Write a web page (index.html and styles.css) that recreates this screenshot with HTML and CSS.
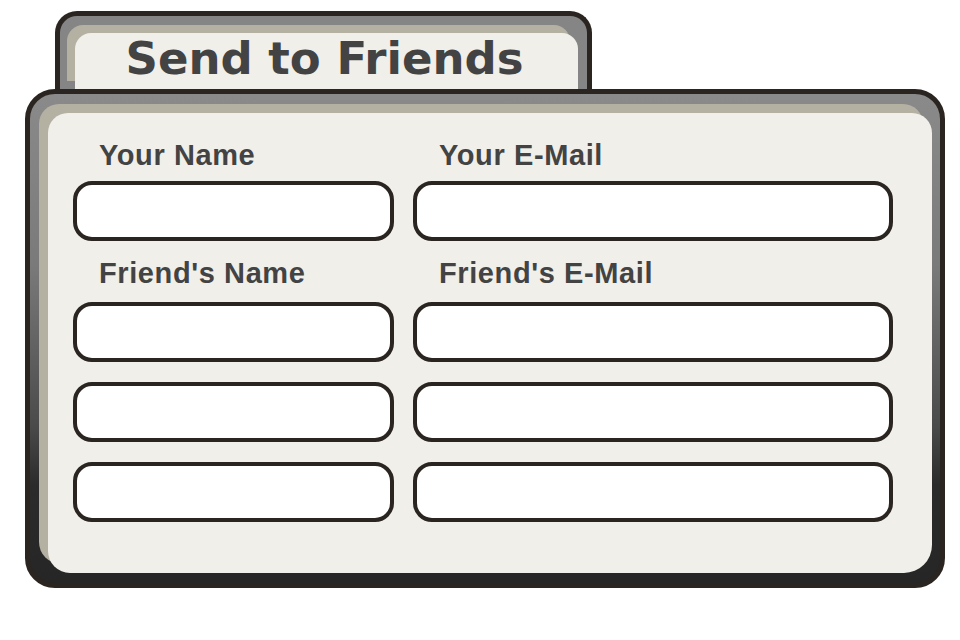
FILE: index.html
```html
<!DOCTYPE html>
<html lang="en">
<head>
<meta charset="utf-8">
<title>Send to Friends</title>
<link rel="stylesheet" href="styles.css">
</head>
<body>
<div class="page">
  <div class="tab">
    <div class="tab-inner">
      <h1 class="title">Send to Friends</h1>
    </div>
  </div>
  <div class="panel">
    <div class="panel-inner">
      <form class="form">
        <label class="label row-a" for="yn">Your Name</label>
        <label class="label row-a" for="ye">Your E-Mail</label>
        <input class="field" id="yn" type="text">
        <input class="field" id="ye" type="text">
        <label class="label row-b" for="fn1">Friend's Name</label>
        <label class="label row-b" for="fe1">Friend's E-Mail</label>
        <input class="field" id="fn1" type="text">
        <input class="field" id="fe1" type="text">
        <input class="field spaced" type="text">
        <input class="field spaced" type="text">
        <input class="field spaced" type="text">
        <input class="field spaced" type="text">
      </form>
    </div>
  </div>
</div>
</body>
</html>
```

FILE: styles.css
```css
html, body {
  margin: 0;
  padding: 0;
  background: #ffffff;
}

.page {
  padding: 11px 0 0 25px;
  width: 920px;
}

.tab {
  margin-left: 30px;
  width: 537px;
  box-sizing: border-box;
  height: 78px;
  border: 5px solid #2a2520;
  border-bottom: none;
  border-radius: 22px 22px 0 0;
  background: #858585;
  padding: 17px 9px 0 15px;
}

.tab-inner {
  height: 56px;
  box-sizing: border-box;
  padding-top: 3px;
  background: #f0efea;
  border-radius: 16px 16px 0 0;
  box-shadow: -8px -8px 0 0 #b4b1a3;
  text-align: center;
}

.title {
  margin: 0;
  padding-right: 4px;
  font-family: "DejaVu Sans", "Liberation Sans", sans-serif;
  font-weight: bold;
  font-size: 45px;
  line-height: 46px;
  color: #434343;
}

.panel {
  width: 920px;
  box-sizing: border-box;
  border: 5px solid #2a2520;
  border-radius: 30px;
  background: linear-gradient(to bottom, #8a8a8a 0%, #7a7a7a 35%, #4a4a4a 68%, #2b2b2b 80%, #262626 100%);
  padding: 19px 8px 10px 18px;
}

.panel-inner {
  background: #f0efea;
  border-radius: 20px 20px 28px 22px;
  box-shadow: -9px -9px 0 0 #b4b1a3;
  padding: 23px 0 51px 25px;
}

.form {
  display: grid;
  grid-template-columns: 321px 480px;
  column-gap: 19px;
  margin: 0;
}

.label {
  display: block;
  height: 34px;
  line-height: 38px;
  padding-left: 26px;
  font-family: "Liberation Sans", Arial, sans-serif;
  font-weight: bold;
  font-size: 29px;
  letter-spacing: 0.6px;
  color: #434343;
}

.row-a {
  margin-bottom: 11px;
}

.row-b {
  margin-top: 13px;
  margin-bottom: 14px;
}

.field {
  display: block;
  box-sizing: border-box;
  width: 100%;
  height: 60px;
  margin: 0;
  border: 4px solid #2a2520;
  border-radius: 19px;
  background: #ffffff;
  outline: none;
}

.spaced {
  margin-top: 20px;
}
```
